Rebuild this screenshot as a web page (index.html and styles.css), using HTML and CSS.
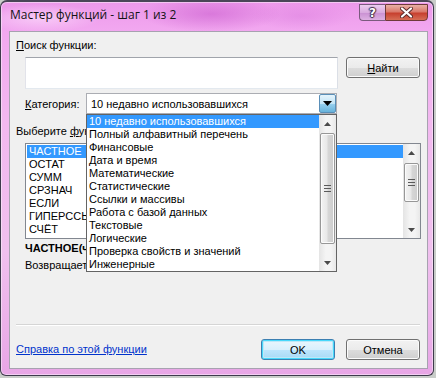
FILE: index.html
```html
<!DOCTYPE html>
<html lang="ru">
<head>
<meta charset="utf-8">
<link rel="stylesheet" href="styles.css">
</head>
<body>
<div class="window">
  <div class="titlebar">
    <span class="title">Мастер функций - шаг 1 из 2</span>
    <div class="caption-buttons">
      <div class="cbtn help">?</div>
      <div class="cbtn close">
        <svg width="13" height="11" viewBox="0 0 13 11"><path d="M2 1.5 L11 9.5 M11 1.5 L2 9.5" stroke="#5a2a2a" stroke-width="4" stroke-linecap="round"/><path d="M2 1.5 L11 9.5 M11 1.5 L2 9.5" stroke="#ffffff" stroke-width="2.2" stroke-linecap="round"/></svg>
      </div>
    </div>
  </div>
  <div class="client">
    <div class="label l-search"><u>П</u>оиск функции:</div>
    <div class="search-row">
      <div class="search-box"></div>
      <button class="btn find"><u>Н</u>айти</button>
    </div>
    <div class="cat-row">
      <span class="cat-label"><u>К</u>атегория:</span>
      <div class="combo">
        <span class="combo-text">10 недавно использовавшихся</span>
        <span class="combo-arrow"><svg width="9" height="5" viewBox="0 0 9 5"><path d="M0 0 H9 L4.5 5Z" fill="#000"/></svg></span>
        <div class="dropdown">
          <ul class="items">
            <li class="sel">10 недавно использовавшихся</li>
            <li>Полный алфавитный перечень</li>
            <li>Финансовые</li>
            <li>Дата и время</li>
            <li>Математические</li>
            <li>Статистические</li>
            <li>Ссылки и массивы</li>
            <li>Работа с базой данных</li>
            <li>Текстовые</li>
            <li>Логические</li>
            <li>Проверка свойств и значений</li>
            <li>Инженерные</li>
          </ul>
          <div class="scrollbar sb-dd">
            <div class="sb-btn"><svg width="7" height="4" viewBox="0 0 7 4"><path d="M0 4 L3.5 0 L7 4Z" fill="#4a4a4a"/></svg></div>
            <div class="sb-track"><div class="thumb"><span class="grip"></span></div></div>
            <div class="sb-btn"><svg width="7" height="4" viewBox="0 0 7 4"><path d="M0 0 L3.5 4 L7 0Z" fill="#4a4a4a"/></svg></div>
          </div>
        </div>
      </div>
    </div>
    <div class="label l-func">Выберите <u>ф</u>ункцию:</div>
    <div class="listbox">
      <ul class="items">
        <li class="sel">ЧАСТНОЕ</li>
        <li>ОСТАТ</li>
        <li>СУММ</li>
        <li>СРЗНАЧ</li>
        <li>ЕСЛИ</li>
        <li>ГИПЕРССЫЛКА</li>
        <li>СЧЁТ</li>
      </ul>
      <div class="scrollbar sb-list">
        <div class="sb-btn"><svg width="7" height="4" viewBox="0 0 7 4"><path d="M0 4 L3.5 0 L7 4Z" fill="#4a4a4a"/></svg></div>
        <div class="sb-track"><div class="thumb"><span class="grip"></span></div></div>
        <div class="sb-btn"><svg width="7" height="4" viewBox="0 0 7 4"><path d="M0 0 L3.5 4 L7 0Z" fill="#4a4a4a"/></svg></div>
      </div>
    </div>
    <div class="sig">ЧАСТНОЕ(числитель;знаменатель)</div>
    <div class="desc">Возвращает целую часть результата деления.</div>
    <div class="footer">
      <div class="sep"></div>
      <div class="footer-row">
        <a class="help-link" href="#">Справка по этой функции</a>
        <button class="btn ok">OK</button>
        <button class="btn cancel">Отмена</button>
      </div>
    </div>
  </div>
</div>
</body>
</html>
```

FILE: styles.css
```css
* { box-sizing: border-box; }
html, body { margin: 0; padding: 0; }
body {
  width: 436px;
  height: 378px;
  background: #c9cdc9;
  font-family: "Liberation Sans", Arial, sans-serif;
  font-size: 11px;
  color: #000;
  overflow: hidden;
}
.window {
  width: 434px;
  height: 376px;
  border: 1px solid #3e3a4c;
  border-top: 2px solid #4a4658;
  border-radius: 7px 7px 6px 6px;
  padding: 0 5px 6px 8px;
  display: flex;
  flex-direction: column;
  background:
    radial-gradient(ellipse 60px 14px at 40px 16px, rgba(255,235,255,0.55), rgba(255,235,255,0) 100%),
    radial-gradient(ellipse 70px 18px at 210px 12px, rgba(200,90,205,0.55), rgba(200,90,205,0) 100%),
    radial-gradient(ellipse 50px 14px at 300px 14px, rgba(215,120,220,0.4), rgba(215,120,220,0) 100%),
    linear-gradient(#ec98ea, #f2a8f0 29px, #f2b8ef 120px, #f0c0ee 250px, #e8a6e6);
  box-shadow: inset 0 0 0 1px rgba(255,255,255,0.45);
}
.titlebar {
  height: 29px;
  display: flex;
  align-items: flex-start;
}
.title {
  font-family: "Open Sans", "Liberation Sans", sans-serif;
  font-size: 12px;
  margin-top: 4px;
  margin-left: 1px;
  color: #141414;
}
.caption-buttons {
  margin-left: auto;
  margin-top: 2px;
  display: flex;
  height: 17px;
}
.cbtn {
  height: 17px;
  border: 1px solid #7a5a7e;
  display: flex;
  align-items: center;
  justify-content: center;
}
.help {
  width: 26px;
  border-right: none;
  border-radius: 0 0 0 4px;
  background: linear-gradient(#eccdf0, #d9aadf 50%, #c98fd2 51%, #ddb0e2);
  font-family: "DejaVu Sans", sans-serif;
  font-weight: bold;
  font-size: 12px;
  color: #fff;
  text-shadow: 0 0 1px #3d2b48, 1px 0 1px #3d2b48, -1px 0 1px #3d2b48, 0 1px 1px #3d2b48, 0 -1px 1px #3d2b48;
}
.close {
  width: 43px;
  border-radius: 0 0 4px 0;
  border-color: #6e3a3a;
  background: linear-gradient(#eab0a6, #d9796b 45%, #c7402f 55%, #d66e56);
}
.client {
  flex: 1;
  border: 1px solid #a7a2b0;
  background: #f0f0f0;
  padding: 0 7px 8px 6px;
  display: flex;
  flex-direction: column;
}
.label { line-height: 13px; height: 13px; white-space: nowrap; }
.l-search { margin-top: 7px; }
.search-row {
  display: flex;
  margin-top: 5px;
  margin-left: 9px;
  gap: 8px;
  align-items: flex-start;
}
.search-box {
  width: 313px;
  height: 32px;
  background: #fff;
  border: 1px solid #abadb3;
  border-top-color: #a0a4ab;
  border-left-color: #e2e3ea;
  border-right-color: #dbdfe6;
  border-bottom-color: #e3e9ef;
}
.btn {
  font-family: "Liberation Sans", Arial, sans-serif;
  font-size: 11px;
  color: #000;
  width: 74px;
  height: 21px;
  padding: 0;
  border: 1px solid #707070;
  border-radius: 3px;
  background: linear-gradient(#f2f2f2, #ebebeb 50%, #dddddd 51%, #cfcfcf);
  box-shadow: inset 0 0 0 1px #fbfbfb;
}
.ok {
  border-color: #3c7fb1;
  box-shadow: inset 0 0 0 1px #48d8fb, inset 0 0 0 2px #bfe8f7;
  background: linear-gradient(#eaf6fd, #d9f0fc 50%, #bee6fd 51%, #a7d9f5);
}
.cat-row {
  display: flex;
  margin-top: 4px;
  margin-left: 9px;
  height: 21px;
  align-items: center;
}
.cat-label { width: 61px; white-space: nowrap; }
.combo {
  position: relative;
  width: 251px;
  height: 21px;
  background: #fff;
  border: 1px solid #abadb3;
  display: flex;
  align-items: center;
  padding-left: 4px;
}
.combo-text { flex: 1; white-space: nowrap; }
.combo-arrow {
  width: 17px;
  height: 19px;
  border: 1px solid #5a8fb8;
  border-radius: 2px;
  background: linear-gradient(#e5f4fc, #c4e5f6 50%, #98d1ef 51%, #68b3db);
  display: flex;
  align-items: center;
  justify-content: center;
}
.dropdown {
  position: absolute;
  left: -1px;
  top: 20px;
  width: 251px;
  height: 158px;
  background: #fff;
  border: 1px solid #646464;
  display: flex;
  z-index: 5;
}
.items {
  list-style: none;
  margin: 0;
  padding: 0;
  flex: 1;
  min-width: 0;
}
.items li {
  height: 13px;
  line-height: 13px;
  padding-left: 2px;
  white-space: nowrap;
  overflow: hidden;
}
.items li.sel { background: #3399ff; color: #fff; }
.scrollbar {
  width: 17px;
  display: flex;
  flex-direction: column;
  background: linear-gradient(90deg, #e4e4e4, #f4f4f4 40%, #f4f4f4 70%, #e8e8e8);
}
.sb-btn {
  height: 17px;
  display: flex;
  align-items: center;
  justify-content: center;
}
.sb-track { flex: 1; padding: 1px 1px 0 1px; }
.thumb {
  border: 1px solid #979797;
  border-radius: 2px;
  background: linear-gradient(90deg, #f3f3f3, #e8e8e8 45%, #d6d6d6 55%, #cdcdcd);
  box-shadow: inset 0 0 0 1px #fbfbfb;
  display: flex;
  align-items: center;
  justify-content: center;
}
.grip {
  width: 7px;
  height: 7px;
  background: repeating-linear-gradient(#5a5a5a 0 1px, transparent 1px 3px);
}
.sb-dd .thumb { height: 111px; }
.listbox {
  margin-top: 5px;
  margin-left: 9px;
  width: 396px;
  height: 96px;
  background: #fff;
  border: 1px solid #828790;
  display: flex;
}
.listbox .items { padding: 1px 0 0 1px; }
.sb-list .sb-track { padding-top: 2px; }
.sb-list .thumb { height: 39px; }
.l-func { margin-top: 11px; }
.sig {
  margin-top: 3px;
  margin-left: 9px;
  font-weight: bold;
  line-height: 13px;
  white-space: nowrap;
}
.desc {
  margin-top: 4px;
  margin-left: 9px;
  line-height: 13px;
  white-space: nowrap;
}
.footer { margin-top: auto; }
.sep {
  height: 2px;
  border-top: 1px solid #d5d5d5;
  border-bottom: 1px solid #ffffff;
}
.footer-row {
  display: flex;
  align-items: center;
  margin-top: 13px;
  gap: 11px;
}
.help-link {
  color: #0033cc;
  text-decoration: underline;
  margin-right: auto;
  padding-bottom: 2px;
}
```
